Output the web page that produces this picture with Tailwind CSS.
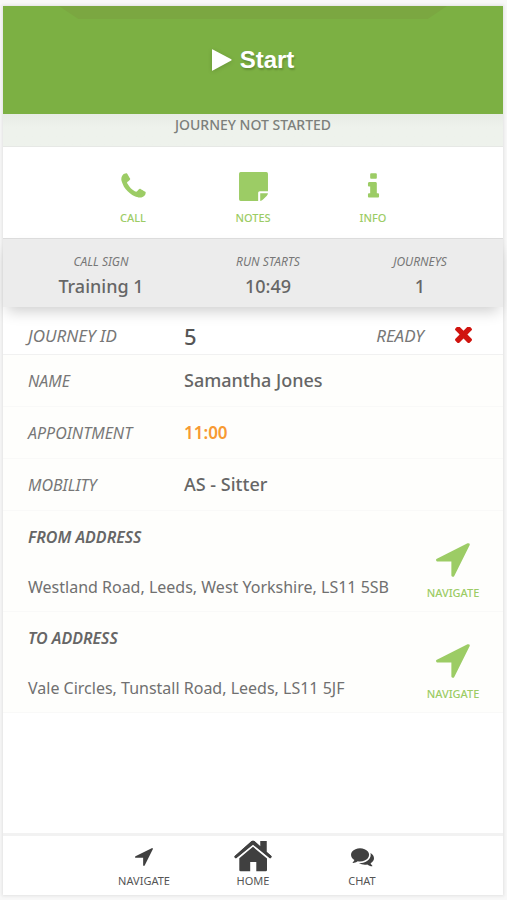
<!DOCTYPE html>
<html lang="en">
<head>
<meta charset="utf-8">
<meta name="viewport" content="width=device-width, initial-scale=1">
<title>Journey</title>
<script src="https://cdn.jsdelivr.net/npm/@tailwindcss/browser@4"></script>
</head>
<body class="bg-[#f8f8f8] font-['Noto_Sans','Open_Sans',sans-serif] text-[#666]">
<svg class="hidden" aria-hidden="true">
  <symbol id="arrow" viewBox="190 250 1420 1420"><path d="M1593 349l-640 1280q-17 35-57 35-5 0-15-2-22-5-35.500-22.500t-13.500-39.500v-576h-576q-22 0-39.500-13.500t-22.500-35.500 4-42 29-30l1280-640q13-7 29-7 27 0 45 19 15 14 18.500 34.500t-6.500 39.500z"/></symbol>
</svg>
<div class="min-h-screen pl-[3px] pr-1 pt-[6px] pb-[5px] flex flex-col">
  <div class="grow flex flex-col bg-white shadow-[0_0_3px_1px_#e2e2e2]">
    <button class="relative w-full h-[108px] shrink-0 bg-[#7cb043] text-white flex items-center justify-center gap-2 overflow-hidden font-['Liberation_Sans',sans-serif] text-[24px] font-bold [text-shadow:1px_2px_2px_#0003]">
      <span class="absolute top-0 inset-x-14 h-[13px] bg-[#7ba741] [clip-path:polygon(0_0,100%_0,95%_100%,5%_100%)]"></span>
      <svg class="w-5 h-[22px] drop-shadow-sm" viewBox="0 0 20 22" fill="#fff" aria-hidden="true"><path d="M0 .8Q0 0 .8.400L19.300 10.300Q20 11 19.300 11.600L.8 21.600Q0 22 0 21.200Z"/></svg>
      Start
    </button>
    <p class="h-[33px] shrink-0 bg-linear-to-b from-[#e7ebe5] to-[#eef2ec] to-40% border-b border-[#e6e8e5] text-center text-[14px] leading-[22px] text-[#7c7f7b] font-medium">JOURNEY NOT STARTED</p>

    <div class="flex justify-center pt-6 pb-3 text-[11px] leading-4 font-medium text-[#9ccc65]">
      <button class="w-[120px] flex flex-col items-center gap-2">
        <svg class="size-[31px]" viewBox="0 0 1792 1792" fill="currentColor" aria-hidden="true"><path d="M1600 1240q0 27-10 70.500t-21 68.500q-21 50-122 106-94 51-186 51-27 0-53-3.500t-57-12.500-47-14.500-55.500-20.500-49.500-18q-98-35-175-83-127-79-264-216t-216-264q-48-77-83-175-3-9-18-49.500t-20.500-55.500-14.500-47-12.500-57-3.500-53q0-92 51-186 56-101 106-122 25-11 68.500-21t70.500-10q14 0 21 3 18 6 53 76 11 19 30 54t35 63.500 31 53.500q3 4 17.500 25t21.500 35.500 7 28.500q0 20-28.500 50t-62 55-62 53-28.500 46q0 9 5 22.500t8.500 20.500 14 24 11.500 19q76 137 174 235t235 174q2 1 19 11.500t24 14 20.500 8.500 22.500 5q18 0 46-28.500t53-62 55-62 50-28.500q14 0 28.500 7t35.500 21.500 25 17.500q25 15 53.500 31t63.500 35 54 30q70 35 76 53 3 7 3 21z"/></svg>
        CALL
      </button>
      <button class="w-[120px] flex flex-col items-center gap-2">
        <svg class="size-[31px]" viewBox="0 0 30 30" fill="currentColor" aria-hidden="true"><path d="M2.600 1H27.400Q29 1 29 2.600V19.500H21Q19.500 19.500 19.500 21V29H2.600Q1 29 1 27.400V2.600Q1 1 2.600 1ZM21.500 21.500H29Q28.800 23 27.700 24.200L24.200 27.700Q23 28.800 21.500 29Z"/></svg>
        NOTES
      </button>
      <button class="w-[120px] flex flex-col items-center gap-2">
        <svg class="size-[31px]" viewBox="0 0 1792 1792" fill="currentColor" aria-hidden="true"><path d="M1216 1344v128q0 26-19 45t-45 19h-512q-26 0-45-19t-19-45v-128q0-26 19-45t45-19h64v-384h-64q-26 0-45-19t-19-45v-128q0-26 19-45t45-19h384q26 0 45 19t19 45v576h64q26 0 45 19t19 45zm-128-1152v192q0 26-19 45t-45 19h-256q-26 0-45-19t-19-45v-192q0-26 19-45t45-19h256q26 0 45 19t19 45z"/></svg>
        INFO
      </button>
    </div>

    <dl class="grid grid-cols-[196fr_138fr_166fr] pt-[13px] pb-[7px] bg-[#ececec] border-t border-[#dcdcdc] text-center shadow-[0_8px_14px_-4px_#0003]">
      <div><dt class="text-[12px] leading-5 italic text-[#777]">CALL SIGN</dt><dd class="text-[18px] leading-7 font-medium">Training 1</dd></div>
      <div><dt class="text-[12px] leading-5 italic text-[#777]">RUN STARTS</dt><dd class="text-[18px] leading-7 font-medium">10:49</dd></div>
      <div><dt class="text-[12px] leading-5 italic text-[#777]">JOURNEYS</dt><dd class="text-[18px] leading-7 font-medium">1</dd></div>
    </dl>

    <div class="flex items-center h-12 pt-[10px] pl-[25px] pr-[31px] border-b border-[#f1f1f1]">
      <span class="w-[156px] text-[17px] italic text-[#777]">JOURNEY ID</span>
      <span class="grow text-[22px] leading-7 font-medium text-[#555]">5</span>
      <span class="text-[17px] italic text-[#777] mr-[31px]">READY</span>
      <svg class="size-[17px]" viewBox="300 430 1190 1190" role="img" aria-label="Not ready" fill="#d0140f"><path d="M1490 1322q0 40-28 68l-136 136q-28 28-68 28t-68-28l-294-294-294 294q-28 28-68 28t-68-28l-136-136q-28-28-28-68t28-68l294-294-294-294q-28-28-28-68t28-68l136-136q28-28 68-28t68 28l294 294 294-294q28-28 68-28t68 28l136 136q28 28 28 68t-28 68l-294 294 294 294q28 28 28 68z"/></svg>
    </div>

    <dl class="bg-[#fefefc]">
      <div class="flex items-center h-[52px] px-[25px] border-b border-[#f9f9f8]"><dt class="w-[156px] text-[16px] italic text-[#777]">NAME</dt><dd class="text-[18px] font-medium">Samantha Jones</dd></div>
      <div class="flex items-center h-[52px] px-[25px] border-b border-[#f9f9f8]"><dt class="w-[156px] text-[16px] italic text-[#777]">APPOINTMENT</dt><dd class="text-[17px] font-semibold text-[#f79a33]">11:00</dd></div>
      <div class="flex items-center h-[52px] px-[25px] border-b border-[#f9f9f8]"><dt class="w-[156px] text-[16px] italic text-[#777]">MOBILITY</dt><dd class="text-[18px] font-medium">AS - Sitter</dd></div>
    </dl>

    <section class="flex justify-between pl-[25px] pr-[22px] pt-4 h-[101px] bg-[#fefefc] border-b border-[#f9f9f8]">
      <div>
        <h2 class="text-[16px] leading-5 font-semibold italic">FROM ADDRESS</h2>
        <p class="mt-7 text-[16px] leading-6 text-[#707070]">Westland Road, Leeds, West Yorkshire, LS11 5SB</p>
      </div>
      <button class="w-14 flex flex-col items-center gap-2 pt-4 text-[11px] leading-4 font-medium text-[#9ccc65]">
        <svg class="size-[34px]" fill="currentColor" aria-hidden="true"><use href="#arrow"/></svg>
        NAVIGATE
      </button>
    </section>
    <section class="flex justify-between pl-[25px] pr-[22px] pt-4 h-[101px] bg-[#fefefc] border-b border-[#f9f9f8]">
      <div>
        <h2 class="text-[16px] leading-5 font-semibold italic">TO ADDRESS</h2>
        <p class="mt-7 text-[16px] leading-6 text-[#707070]">Vale Circles, Tunstall Road, Leeds, LS11 5JF</p>
      </div>
      <button class="w-14 flex flex-col items-center gap-2 pt-4 text-[11px] leading-4 font-medium text-[#9ccc65]">
        <svg class="size-[34px]" fill="currentColor" aria-hidden="true"><use href="#arrow"/></svg>
        NAVIGATE
      </button>
    </section>

    <nav class="mt-auto flex justify-center items-end pt-1 pb-[6px] border-t-3 border-[#f2f2f2] text-[11px] leading-4 text-[#555]">
      <a href="#navigate" class="w-[109px] flex flex-col items-center gap-[7px]">
        <svg class="size-[18px] text-[#404040]" fill="currentColor" aria-hidden="true"><use href="#arrow"/></svg>
        NAVIGATE
      </a>
      <a href="#home" class="w-[109px] flex flex-col items-center gap-[1px]">
        <svg class="w-[38px] h-8 text-[#404040]" viewBox="0 0 38 32" fill="currentColor" aria-hidden="true"><path d="M.5 16.300 17.700 1.100Q19 .2 20.300 1.100L26.500 6.500V1H32.500V11.700L37.600 16.300Q38 17 37.300 17.600L36.300 18.500 19 3.900 1.700 18.500.6 17.500Q0 17 .5 16.300Z"/><path d="M.5 16.300 17.700 1.100Q19 .2 20.300 1.100L26.500 6.500V1H32.500V11.700L37.600 16.300 35.800 18.200 19 4.800 2.200 18.200Z"/><path d="M19 6.800 33 18.400V30Q33 31.300 31.700 31.300H22.300V22H16.200V31.300H6.600Q5.300 31.300 5.300 30V18.200Z"/></svg>
        HOME
      </a>
      <a href="#chat" class="w-[109px] flex flex-col items-center gap-[5px]">
        <svg class="size-[23px] text-[#404040]" viewBox="0 0 1792 1792" fill="currentColor" aria-hidden="true"><path d="M1408 768q0 139-94 257t-256.500 186.500-353.500 68.500q-86 0-176-16-124 88-278 128-36 9-86 16h-3q-11 0-20.500-8t-11.500-21q-1-3-1-6.500t.5-6.500 2-6l2.500-5 3.500-5.500 4-5 4.500-5 4-4.500q5-6 23-25t26-29.500 22.500-29 25-38.500 20.500-44q-124-72-195-177t-71-224q0-139 94-257t256.500-186.500 353.500-68.500 353.500 68.500 256.500 186.500 94 257zm384 256q0 120-71 224.500t-195 176.500q10 24 20.500 44t25 38.500 22.500 29 26 29.500 23 25q1 1 4 4.500t4.500 5 4 5 3.500 5.500l2.500 5 2 6 .5 6.500-1 6.500q-3 14-13 22t-22 7q-50-7-86-16-154-40-278-128-90 16-176 16-271 0-472-132 58 4 88 4 161 0 309-45t264-129q125-92 192-212t67-254q0-77-23-152 129 71 204 178t75 230z"/></svg>
        CHAT
      </a>
    </nav>
  </div>
</div>
</body>
</html>
